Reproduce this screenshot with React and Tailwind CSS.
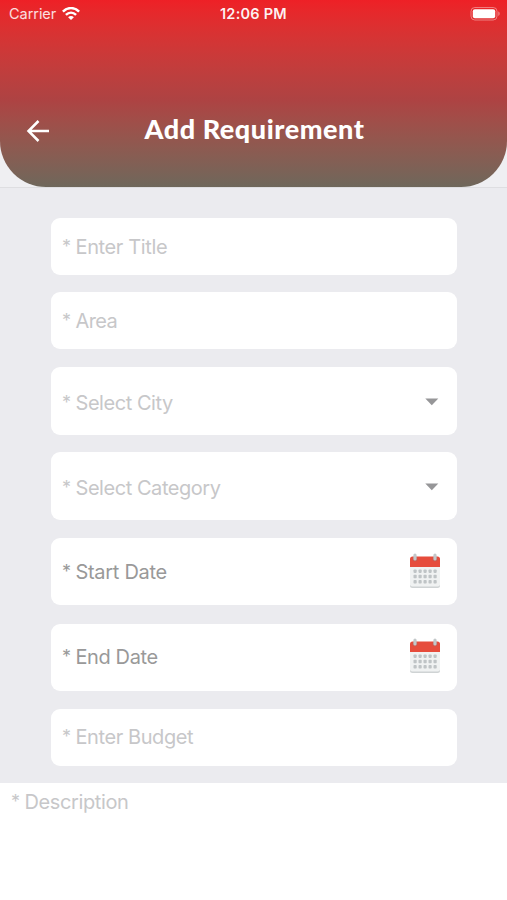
import React, { useState } from 'react';

const fields = [
    { name: 'title', label: 'Enter Title', type: 'text', box: 'h-[57px] mb-[17px]', text: 'text-[#c7c7c9]', tracking: 'tracking-[-0.37px]' },
    { name: 'area', label: 'Area', type: 'text', box: 'h-[57px] mb-[18px]', text: 'text-[#c7c7c9]', tracking: 'tracking-[-0.6px]' },
    { name: 'city', label: 'Select City', type: 'select', box: 'h-[68px] mb-[17px] pt-[4px]', text: 'text-[#c7c7c9]', tracking: 'tracking-[-0.45px]' },
    { name: 'category', label: 'Select Category', type: 'select', box: 'h-[68px] mb-[18px] pt-[4px]', text: 'text-[#c7c7c9]', tracking: 'tracking-[-0.45px]' },
    { name: 'start', label: 'Start Date', type: 'date', box: 'h-[67px] mb-[19px]', text: 'text-[#999999]', tracking: 'tracking-[-0.3px]' },
    { name: 'end', label: 'End Date', type: 'date', box: 'h-[67px] mb-[18px] pb-px', text: 'text-[#999999]', tracking: 'tracking-[-0.4px]' },
    { name: 'budget', label: 'Enter Budget', type: 'text', box: 'h-[57px] mb-[17px] pb-px', text: 'text-[#c7c7c9]', tracking: 'tracking-[-0.42px]' },
];

const WifiIcon = () => (
    <svg width="18" height="14" viewBox="0 0 18 14" fill="none" stroke="white" strokeWidth="2.5">
        <path d="M0.9 4.6C5.6 -0.1 12.4 -0.1 17.1 4.6" />
        <path d="M3.9 7.8C7 4.9 11 4.9 14.1 7.8" />
        <path d="M9 13.1L6.1 10.2C7.9 8.7 10.1 8.7 11.9 10.2Z" fill="white" stroke="none" />
    </svg>
);

const BatteryIcon = () => (
    <svg width="31" height="14" viewBox="0 0 31 14" fill="none">
        <rect x="1" y="0.5" width="26" height="12.5" rx="3.8" stroke="white" strokeOpacity="0.4" />
        <rect x="2.8" y="2.3" width="22.4" height="9" rx="2" fill="white" />
        <path d="M28.3 4.6C30.1 5.2 30.1 8.3 28.3 8.9Z" fill="white" fillOpacity="0.45" />
    </svg>
);

const CalendarIcon = () => (
    <svg className="-mt-[2px] mr-px" width="32" height="36" viewBox="0 0 32 36">
        <path d="M1 13H31V32.5Q31 35 28.5 35H3.5Q1 35 1 32.5Z" fill="#cfd3d4" />
        <path d="M1 13H31V31.3Q31 33.5 28.5 33.5H3.5Q1 33.5 1 31.3Z" fill="#f0f2f2" />
        <path d="M3.5 3.5H28.5Q31 3.5 31 6V14H1V6Q1 3.5 3.5 3.5Z" fill="#e64c3c" />
        {[6, 26].map(x => (
            <g key={x}>
                <circle cx={x} cy="6" r="2.5" fill="#c9584e" />
                <rect x={x - 1.6} y="0.5" width="3.2" height="7" rx="1.6" fill="#c3c8ca" />
            </g>
        ))}
        {[16.5, 21.8, 27.1].map(y =>
            [4.5, 9.5, 14.5, 19.5, 24.5].map(x => (
                <rect key={`${x}-${y}`} x={x} y={y} width="3.2" height="3.4" rx="0.8" fill="#bfc4c6" />
            ))
        )}
    </svg>
);

const Label = ({ field }) => (
    <span className={`flex text-[20px] leading-6 whitespace-nowrap ${field.text}`}>
        <span className="w-[13.5px] text-[18px]">*</span>
        <span className={field.tracking}>{field.label}</span>
    </span>
);

const Field = ({ field, onSelect }) => (
    <button
        onClick={() => onSelect(field.name)}
        className={`w-full shrink-0 flex items-center justify-between bg-white rounded-[9px] pl-[11px] pr-[15px] text-left ${field.box}`}
    >
        <Label field={field} />
        {field.type === 'select' && (
            <svg className="mr-[3px] -mt-[2px]" width="14" height="8" viewBox="0 0 14 8">
                <path d="M0.3 0.5H13.3L6.8 7.3Z" fill="#969698" />
            </svg>
        )}
        {field.type === 'date' && <CalendarIcon />}
    </button>
);

const Header = () => (
    <div className="h-[188px] shrink-0 bg-[#efeff2] border-b border-[#dedee1]">
        <header className="h-[186.5px] flex flex-col rounded-b-[46px] overflow-hidden text-white bg-linear-to-b from-[#ee2026] via-[#ad4343] via-54% to-[#6e675b]">
            <div className="grid grid-cols-3 items-center h-7 pl-[9px] pr-[6px]">
                <div className="flex items-center gap-[6px]">
                    <span className="text-[14.5px] leading-5 text-white/85 tracking-[-0.05px]">Carrier</span>
                    <WifiIcon />
                </div>
                <span className="-ml-[3px] text-center text-[14.5px] leading-5 font-semibold text-white/95 tracking-[0.25px] whitespace-nowrap">12:06 PM</span>
                <div className="flex justify-end">
                    <BatteryIcon />
                </div>
            </div>
            <div className="flex items-center mt-[82px] h-10 px-[26px]">
                <button className="w-6 h-6 mt-[2px]">
                    <svg width="24" height="24" viewBox="0 0 24 24" fill="none" stroke="white" strokeWidth="2.5">
                        <path d="M23 12H2.5M12.5 2L2.5 12L12.5 22" />
                    </svg>
                </button>
                <h1 className="flex-1 mr-[22px] -mt-[2px] text-center font-['Lato'] font-black text-[27px] leading-8 tracking-[0.55px] whitespace-nowrap">
                    Add Requirement
                </h1>
            </div>
        </header>
    </div>
);

export default function App() {
    const [, setActive] = useState(null);

    return (
        <div className="flex flex-col h-[900px] overflow-hidden bg-[#ebebef] font-['Inter',sans-serif]">
            <Header />
            <main className="flex-1 flex flex-col pt-[30px]">
                <div className="flex flex-col pl-[51px] pr-[50px]">
                    {fields.map(field => (
                        <Field key={field.name} field={field} onSelect={setActive} />
                    ))}
                </div>
                <div className="flex-1 bg-white pl-[11px] pt-[7px]">
                    <Label field={{ label: 'Description', text: 'text-[#c7c7c9]', tracking: 'tracking-[-0.38px]' }} />
                </div>
            </main>
        </div>
    );
}
